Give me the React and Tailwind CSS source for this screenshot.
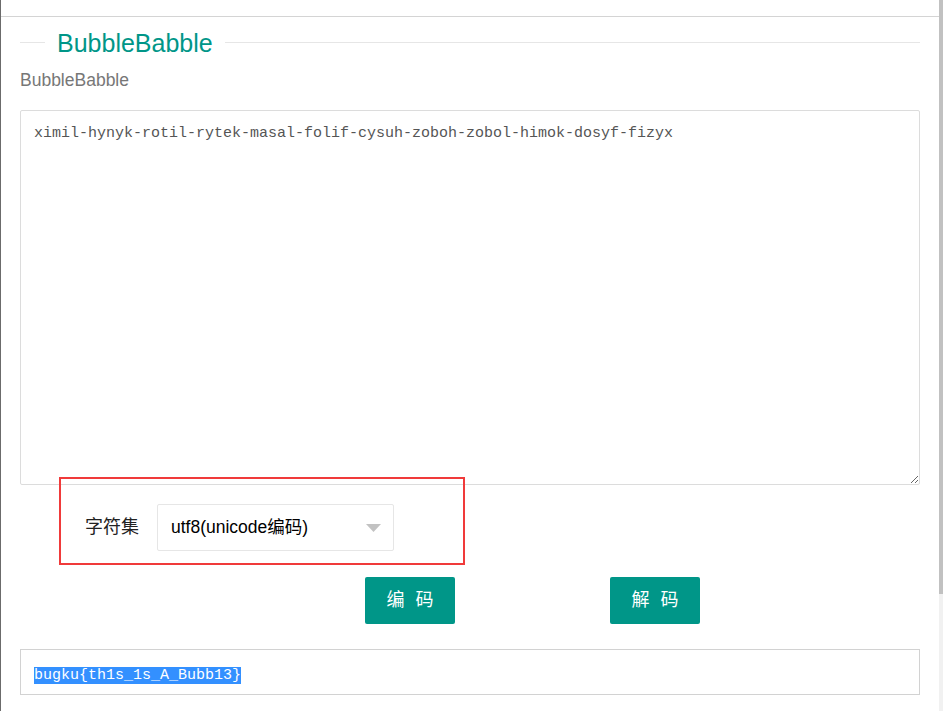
import { useState } from 'react';

const cjk = "font-['Liberation_Sans','Noto_Sans_CJK_SC',sans-serif]";
const mono = "font-['Liberation_Mono','Noto_Sans_CJK_SC',monospace]";

export default function App() {
  const [text] = useState('ximil-hynyk-rotil-rytek-masal-folif-cysuh-zoboh-zobol-himok-dosyf-fizyx');

  return (
    <div className={`flex h-[711px] w-[943px] overflow-hidden bg-white ${cjk}`}>
      <div className="relative w-[939px] border-l border-[#6b6b6b]">
        {/* top strip */}
        <div className="h-[17px] border-b border-[#d4d4d4]" />

        <div className="px-[19px]">
          {/* legend */}
          <div className="mt-[11px] flex h-[28px] items-center">
            <div className="h-px w-[25px] bg-[#e6e6e6]" />
            <span className="px-[12px] pt-[2px] text-[25px] leading-[28px] text-[#009688]">BubbleBabble</span>
            <div className="h-px flex-1 bg-[#e6e6e6]" />
          </div>

          <p className="mt-[12px] text-[17.5px] leading-[24px] text-[#777]">BubbleBabble</p>

          <textarea
            readOnly
            value={text}
            className={`mt-[18px] block h-[375px] w-full rounded-[2px] border border-[#dcdcdc] px-[13px] py-[13px] text-[15px] leading-[20px] text-[#555] outline-none ${mono}`}
          />

          {/* charset row */}
          <div className="mt-[19px] flex items-center pl-[65px]">
            <label className="w-[54px] text-[18px] text-[#222]">字符集</label>
            <div className="ml-[18px] flex h-[47px] w-[237px] items-center justify-between rounded-[2px] border border-[#e6e6e6] pl-[13px] pr-[12px]">
              <span className="text-[17.5px] text-black">utf8(unicode编码)</span>
              <svg width="15" height="8" viewBox="0 0 15 8">
                <path d="M0 0 L15 0 L7.5 8 Z" fill="#c2c2c2" />
              </svg>
            </div>
          </div>

          {/* buttons */}
          <div className="mt-[26px] flex pl-[345px]">
            <button className="h-[47px] w-[90px] rounded-[2px] bg-[#009688] pl-[3px] text-[18px] tracking-[3px] text-white">编 码</button>
            <button className="ml-[155px] h-[47px] w-[90px] rounded-[2px] bg-[#009688] pl-[3px] text-[18px] tracking-[3px] text-white">解 码</button>
          </div>

          {/* result */}
          <div className="mt-[25px] h-[46px] border border-[#d2d2d2] px-[13px] py-[12px]">
            <span className={`bg-[#3390ff] text-[15px] leading-[20px] text-white ${mono}`}>bugku{'{'}th1s_1s_A_Bubb13{'}'}</span>
          </div>
        </div>

        {/* red annotation box */}
        <div className="absolute left-[58px] top-[477px] h-[88px] w-[406px] border-2 border-[#f03a3a]" />
      </div>

      {/* scrollbar */}
      <div className="flex w-[4px] flex-col">
        <div className="h-[594px] bg-[#c1c1c1]" />
        <div className="flex-1 bg-[#f1f1f1]" />
      </div>
    </div>
  );
}
